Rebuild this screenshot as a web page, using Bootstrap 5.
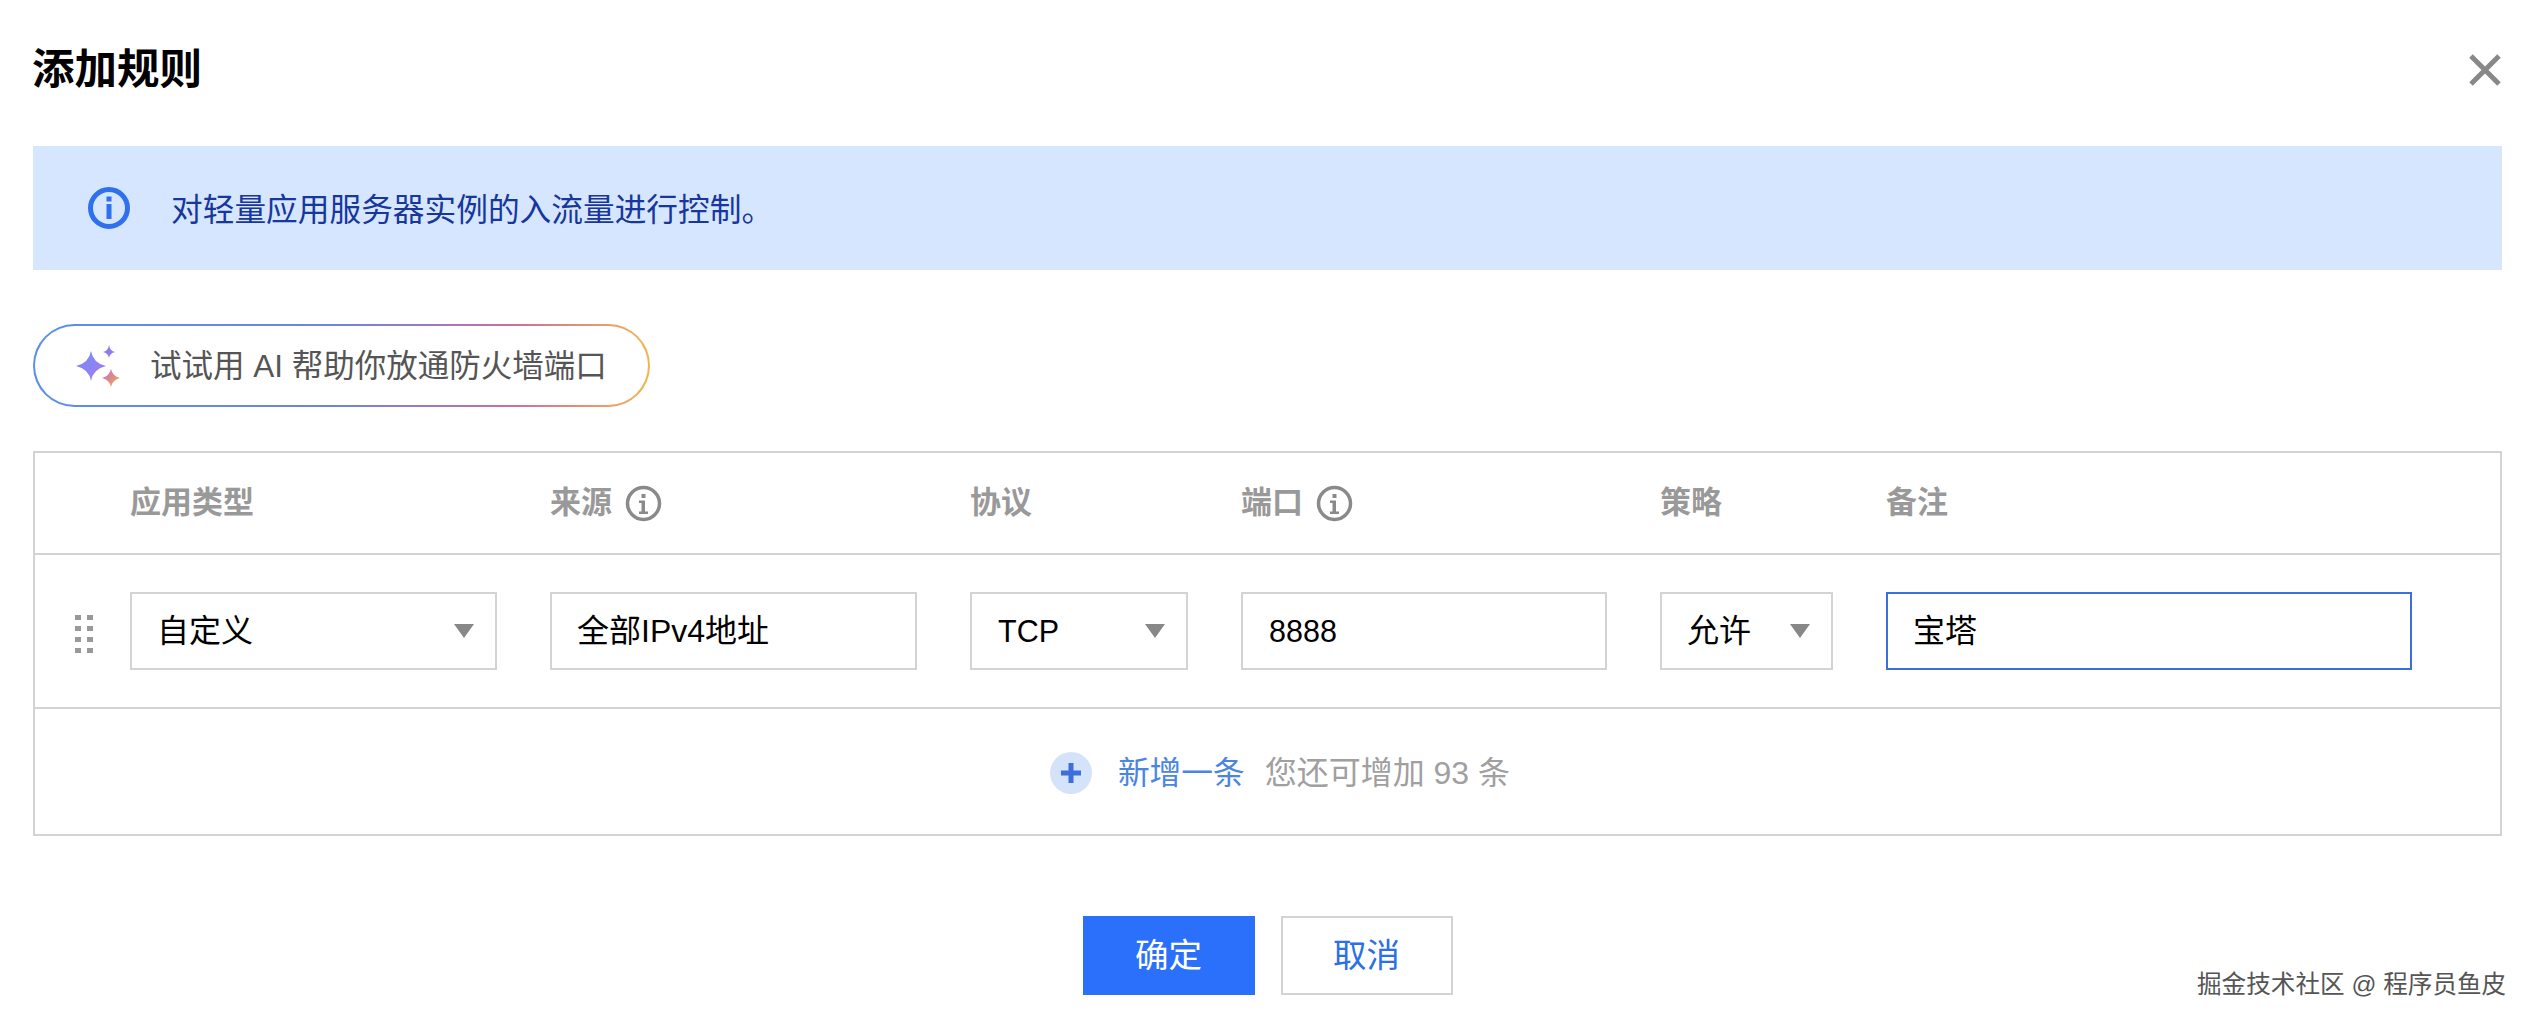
<!DOCTYPE html>
<html lang="zh-CN">
<head>
    <meta charset="UTF-8">
    <meta name="viewport" content="width=device-width, initial-scale=1.0">
    <title>添加规则</title>
    <link href="https://cdn.jsdelivr.net/npm/bootstrap@5.3.2/dist/css/bootstrap.min.css" rel="stylesheet">
    <style>
        html, body { height: 100%; }
        body {
            background: #fff;
            color: #000;
            font-family: "Liberation Sans", "Noto Sans CJK SC", sans-serif;
            font-size: 32px;
            line-height: 40px;
            overflow: hidden;
        }
        .dialog-box { padding: 40px 33px 0; }
        .dialog-head { height: 60px; margin-bottom: 46px; }
        .dialog-title { font-size: 42.5px; line-height: 60px; font-weight: 700; margin: 0 0 0 -1px; }
        .close-x { width: 36px; height: 36px; margin-right: -1px; }

        .tip-box {
            height: 124px;
            padding: 0 0 0 54px;
            gap: 40px;
            background: #d6e6fe;
            color: #17379c;
            font-size: 31.7px;
            margin-bottom: 54px;
        }
        .tip-box span { padding-top: 3px; }
        .ai-btn {
            width: 617px;
            height: 83px;
            padding: 0 0 0 40px;
            gap: 27px;
            border: 2px solid transparent;
            border-radius: 42px;
            background: linear-gradient(#fff, #fff) padding-box,
                linear-gradient(90deg, #5b90e8 0%, #6f83e0 50%, #cc6f9c 78%, #f2b553 100%) border-box;
            color: #555;
            font-size: 31.5px;
            margin-bottom: 44px;
        }

        .rule-wrap { border: 2px solid #d3d3d3; }
        .rule-grid {
            display: grid;
            grid-template-columns: 367px 367px 218px 366px 173px 526px;
            column-gap: 53px;
            padding-left: 95px;
        }
        .rule-head {
            height: 102px;
            align-items: center;
            border-bottom: 2px solid #d3d3d3;
            color: #999;
            font-weight: 700;
            font-size: 31px;
        }
        .rule-head svg { width: 37px; height: 37px; margin-left: 13px; }
        .rule-row {
            position: relative;
            height: 154px;
            align-items: center;
            border-bottom: 2px solid #d3d3d3;
        }
        .drag-dots {
            position: absolute;
            left: 40px;
            top: 60px;
            width: 18px;
            height: 38px;
        }
        .rule-field {
            height: 78px;
            padding: 0 0 0 25px;
            border: 2px solid #d3d3d3;
            border-radius: 0;
            font-size: 32px;
            line-height: 40px;
            color: #000;
            background: #fff;
        }
        .rule-field.is-latin { font-size: 30.5px; padding-left: 26px; }
        .rule-field.is-active { border-color: #3a6fdc; }
        .field-arrow { width: 20px; height: 14px; margin-right: 21px; flex: none; }
        .add-line { height: 125px; padding: 3px 0 0 25px; }
        .add-plus { width: 42px; height: 42px; margin-right: 26px; }
        .add-link { color: #4a85e4; font-size: 31.7px; margin-right: 20px; }
        .add-note { color: #a0a0a0; font-size: 32px; }

        .dialog-foot { gap: 26px; margin-top: 80px; }
        .foot-btn {
            width: 172px;
            height: 79px;
            padding: 0;
            border-radius: 0;
            font-size: 33.5px;
            line-height: 40px;
        }
        .foot-ok, .foot-ok:hover { background: #2b70fb; border-color: #2b70fb; color: #fff; }
        .foot-no, .foot-no:hover { background: #fff; border: 2px solid #d3d3d3; color: #2b70e8; }
        .watermark {
            position: absolute;
            left: 2197px;
            top: 969px;
            font-size: 24.6px;
            line-height: 32px;
            color: #555;
            white-space: nowrap;
            text-shadow: 1px 1px 0 #fff, -1px 0 0 #fff;
        }
    </style>
</head>
<body>
    <div class="dialog-box">
        <!-- 标题 -->
        <div class="dialog-head d-flex align-items-center justify-content-between">
            <h1 class="dialog-title">添加规则</h1>
            <svg class="close-x" viewBox="0 0 36 36"><path d="M4 4 L32 32 M32 4 L4 32" stroke="#888" stroke-width="5" fill="none"/></svg>
        </div>

        <!-- 提示 -->
        <div class="tip-box d-flex align-items-center">
            <svg width="44" height="44" viewBox="0 0 44 44" class="flex-shrink-0">
                <circle cx="22" cy="22" r="18.5" fill="none" stroke="#2f70ee" stroke-width="5"/>
                <rect x="19.5" y="10.5" width="5" height="5" fill="#2f70ee"/>
                <rect x="19.5" y="18" width="5" height="15" fill="#2f70ee"/>
            </svg>
            <span>对轻量应用服务器实例的入流量进行控制。</span>
        </div>

        <!-- AI 按钮 -->
        <div class="ai-btn d-flex align-items-center">
            <svg width="48" height="48" viewBox="0 0 48 48" class="flex-shrink-0">
                <defs>
                    <linearGradient id="bigStar" x1="0" y1="0" x2="1" y2="1">
                        <stop offset="0" stop-color="#6f8cf5"/>
                        <stop offset="1" stop-color="#a77cf0"/>
                    </linearGradient>
                    <linearGradient id="smallStar" x1="0" y1="0" x2="1" y2="1">
                        <stop offset="0" stop-color="#c465d8"/>
                        <stop offset="1" stop-color="#f5b041"/>
                    </linearGradient>
                </defs>
                <path d="M16 9 Q18 21 31 24 Q18 27 16 39 Q14 27 1 24 Q14 21 16 9 Z" fill="url(#bigStar)"/>
                <path d="M34 3 Q35 9 40 10 Q35 11 34 16 Q33 11 28 10 Q33 9 34 3 Z" fill="#8f7bef"/>
                <path d="M36 27 Q37.500 34 45 36 Q37.500 38 36 45 Q34.500 38 27 36 Q34.500 34 36 27 Z" fill="url(#smallStar)"/>
            </svg>
            <span>试试用 AI 帮助你放通防火墙端口</span>
        </div>

        <!-- 规则表 -->
        <div class="rule-wrap">
            <div class="rule-grid rule-head">
                <div>应用类型</div>
                <div class="d-flex align-items-center">来源
                    <svg viewBox="0 0 37 37"><circle cx="18.500" cy="18.500" r="16" fill="none" stroke="#8a8a8a" stroke-width="3.500"/><rect x="16.500" y="9" width="4" height="4" fill="#8a8a8a"/><path d="M14 15.500h6v11h3v2.500h-9v-2.500h2.500v-8.500h-2.500z" fill="#8a8a8a"/></svg>
                </div>
                <div>协议</div>
                <div class="d-flex align-items-center">端口
                    <svg viewBox="0 0 37 37"><circle cx="18.500" cy="18.500" r="16" fill="none" stroke="#8a8a8a" stroke-width="3.500"/><rect x="16.500" y="9" width="4" height="4" fill="#8a8a8a"/><path d="M14 15.500h6v11h3v2.500h-9v-2.500h2.500v-8.500h-2.500z" fill="#8a8a8a"/></svg>
                </div>
                <div>策略</div>
                <div>备注</div>
            </div>

            <div class="rule-grid rule-row">
                <svg class="drag-dots" viewBox="0 0 18 38">
                    <g fill="#999">
                        <rect x="0" y="0" width="6" height="5"/><rect x="12" y="0" width="6" height="5"/>
                        <rect x="0" y="11" width="6" height="5"/><rect x="12" y="11" width="6" height="5"/>
                        <rect x="0" y="22" width="6" height="5"/><rect x="12" y="22" width="6" height="5"/>
                        <rect x="0" y="33" width="6" height="5"/><rect x="12" y="33" width="6" height="5"/>
                    </g>
                </svg>
                <div class="rule-field d-flex align-items-center justify-content-between">自定义
                    <svg class="field-arrow" viewBox="0 0 20 14"><path d="M0 0H20L10 14Z" fill="#888"/></svg>
                </div>
                <div class="rule-field d-flex align-items-center">全部IPv4地址</div>
                <div class="rule-field is-latin d-flex align-items-center justify-content-between">TCP
                    <svg class="field-arrow" viewBox="0 0 20 14"><path d="M0 0H20L10 14Z" fill="#888"/></svg>
                </div>
                <div class="rule-field is-latin d-flex align-items-center">8888</div>
                <div class="rule-field d-flex align-items-center justify-content-between">允许
                    <svg class="field-arrow" viewBox="0 0 20 14"><path d="M0 0H20L10 14Z" fill="#888"/></svg>
                </div>
                <div class="rule-field is-active d-flex align-items-center">宝塔</div>
            </div>

            <div class="add-line d-flex align-items-center justify-content-center">
                <svg class="add-plus" viewBox="0 0 42 42">
                    <circle cx="21" cy="21" r="21" fill="#d5e3fa"/>
                    <path d="M21 11V31M11 21H31" stroke="#3c6fdc" stroke-width="5" fill="none"/>
                </svg>
                <span class="add-link">新增一条</span>
                <span class="add-note">您还可增加 93 条</span>
            </div>
        </div>

        <!-- 底部按钮 -->
        <div class="dialog-foot d-flex justify-content-center">
            <button type="button" class="btn foot-btn foot-ok">确定</button>
            <button type="button" class="btn foot-btn foot-no">取消</button>
        </div>
    </div>
    <div class="watermark">掘金技术社区 @ 程序员鱼皮</div>
    <script src="https://cdn.jsdelivr.net/npm/bootstrap@5.3.2/dist/js/bootstrap.bundle.min.js"></script>
</body>
</html>
